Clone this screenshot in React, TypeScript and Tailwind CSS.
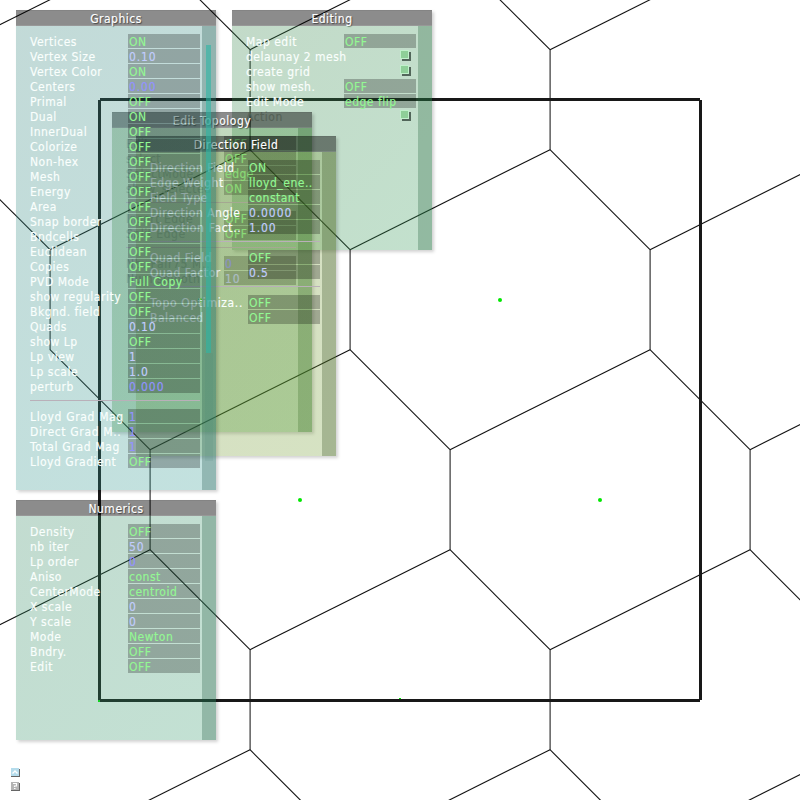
import React from "react";

type Kind = "toggle" | "num" | "locked" | "button" | "sep";

interface Row {
  label?: string;
  value?: string;
  kind: Kind;
  disabled?: boolean;
}

const on = (label: string, value = "OFF", disabled = false): Row => ({ label, value, kind: "toggle", disabled });
const num = (label: string, value: string, disabled = false): Row => ({ label, value, kind: "num", disabled });
const locked = (label: string, value: string, disabled = false): Row => ({ label, value, kind: "locked", disabled });
const button = (label: string, disabled = false): Row => ({ label, kind: "button", disabled });
const sep: Row = { kind: "sep" };

const graphics: Row[] = [
  on("Vertices", "ON"), num("Vertex Size", "0.10"), on("Vertex Color", "ON"), locked("Centers", "0.00"),
  on("Primal"), on("Dual", "ON"), on("InnerDual"), on("Colorize"), on("Non-hex"), on("Mesh"), on("Energy"),
  on("Area"), on("Snap border"), on("Bndcells"), on("Euclidean"), on("Copies"), on("PVD Mode", "Full Copy"),
  on("show regularity"), on("Bkgnd. field"), num("Quads", "0.10"), on("show Lp"), num("Lp view", "1"),
  num("Lp scale", "1.0"), locked("perturb", "0.000"), sep, locked("Lloyd Grad Mag", "1"),
  locked("Direct Grad M..", "1"), locked("Total Grad Mag", "1"), on("Lloyd Gradient"),
];

const numerics: Row[] = [
  on("Density"), num("nb iter", "50"), locked("Lp order", "0"), on("Aniso", "const"),
  on("CenterMode", "centroid"), num("X scale", "0"), num("Y scale", "0"), on("Mode", "Newton"),
  on("Bndry."), on("Edit"),
];

const editing: Row[] = [
  on("Map edit"), button("delaunay 2 mesh"), button("create grid"), on("show mesh."),
  on("Edit Mode", "edge flip"), button("Action", true),
];

const topology: Row[] = [
  on("Edit", "OFF", true), on("select", "OFF", true), on("SelectMode", "edge", true),
  on("show_selected", "ON", true), sep, on("Insert Edge", "OFF", true), on("Split Edge", "OFF", true), sep,
  locked("Nb. Pair75 M..", "0", true), num("Num smooth", "10", true),
];

const direction: Row[] = [
  on("Direction Field", "ON"), on("Edge Weight", "lloyd_ene.."), on("Field Type", "constant"),
  num("Direction Angle", "0.0000"), num("Direction Fact..", "1.00"), sep, on("Quad Field"),
  num("Quad Factor", "0.5"), sep, on("Topo Optimiza.."), on("Balanced"),
];

const valueColor: Record<Kind, string> = {
  toggle: "text-[#93f893]",
  num: "text-[#c2cdff] tracking-[0.9px]",
  locked: "text-[#9292ff] tracking-[0.9px]",
  button: "",
  sep: "",
};

// Labels cut short with dots, and the gradient read-outs, are set a little wider.
const labelTracking = (label = "") => (/\.\.$|Grad /.test(label) ? "tracking-[0.65px]" : "");

function PanelRow({ row }: { row: Row }) {
  if (row.kind === "sep") {
    return (
      <div className="h-[15px] pt-[6px]">
        <div className="h-px bg-[#b9b0b9]" />
      </div>
    );
  }
  return (
    <div className="flex h-[15px] leading-[17px]">
      <div
        className={`w-[98px] shrink-0 ${labelTracking(row.label)} ${row.disabled ? "text-[#9bb39f]" : "text-[#fafffd]"}`}
      >
        {row.label}
      </div>
      {row.kind === "button" ? (
        <div className="flex w-[72px] justify-end pt-[1px] pr-[7px]">
          <div className="h-[9px] w-[9px] border border-[#c0f0cb] bg-[#8ecf98] shadow-[2px_2px_0_#52665a]" />
        </div>
      ) : (
        <div className={`h-[14px] w-[72px] bg-black/25 pl-[1px] ${valueColor[row.kind]}`}>{row.value}</div>
      )}
    </div>
  );
}

interface PanelProps {
  title: string;
  rows: Row[];
  place: string;
  fill: string;
  track: string;
  thumb?: boolean;
}

function Panel({ title, rows, place, fill, track, thumb }: PanelProps) {
  return (
    <section className={`absolute flex w-[200px] flex-col shadow-[2px_2px_3px_rgba(0,0,0,0.18)] ${place}`}>
      <header className="h-[16px] border-t border-b border-t-black/5 border-b-white/10 bg-black/45 text-center leading-[17px] text-white [text-shadow:1px_1px_1px_rgba(0,0,0,0.5)]">
        {title}
      </header>
      <div className={`flex min-h-0 flex-1 ${fill}`}>
        <div className="w-[186px] pt-[8px] pr-[2px] pl-[14px]">
          {rows.map((row, i) => (
            <PanelRow key={i} row={row} />
          ))}
        </div>
        <div className={`flex w-[14px] flex-col items-center pt-[19px] pr-[1px] ${track}`}>
          {thumb && <div className="h-[308px] w-[5px] bg-[#2bb5a5]/60" />}
          {thumb && <div className="h-[108px] w-[8px] bg-[#378078]/10" />}
        </div>
      </div>
    </section>
  );
}

const verticals: [number, number][] = [
  [250, 50], [550, 50], [50, 250], [350, 250], [650, 250], [150, 450], [450, 450], [750, 450], [250, 650], [550, 650],
];

const junctions: [number, number][] = [
  [-50, 50], [250, 50], [550, 50], [850, 50], [50, 250], [350, 250], [650, 250], [150, 450], [450, 450],
  [750, 450], [250, 650], [550, 650], [-50, 650], [850, 650], [50, 850], [350, 850], [650, 850],
];

// Each lattice cell repeats a falling edge and a rising edge below its vertical one.
const lowerEnds: [number, number][] = [
  [250, 150], [550, 150], [-50, 150], [50, 350], [350, 350], [650, 350],
  [150, 550], [450, 550], [750, 550], [250, 750], [550, 750],
];

function MeshView() {
  return (
    <svg className="absolute inset-0" width="800" height="800" viewBox="0 0 800 800">
      <g stroke="#111" strokeWidth="1.1">
        {junctions.map(([x, y], i) => (
          <line key={i} x1={x} y1={y - 0.3} x2={x + 200} y2={y - 100.3} />
        ))}
        {lowerEnds.map(([x, y], i) => (
          <line key={i} x1={x} y1={y - 0.3} x2={x + 100} y2={y + 99.7} />
        ))}
        <line x1="150" y1="-50" x2="250" y2="49.7" />
        <line x1="450" y1="-50" x2="550" y2="49.7" />
      </g>
      <g stroke="#222" strokeWidth="1.1">
        {verticals.map(([x, y], i) => (
          <line key={i} x1={x + 0.1} y1={y} x2={x + 0.1} y2={y + 100} />
        ))}
      </g>
      <g stroke="#181818" strokeWidth="3">
        <line x1="100" y1="99.5" x2="700" y2="99.5" />
        <line x1="100" y1="700.5" x2="700" y2="700.5" />
        <line x1="99.5" y1="100" x2="99.5" y2="700" />
        <line x1="700.5" y1="100" x2="700.5" y2="700" />
      </g>
      <g fill="#00e800">
        <circle cx="500" cy="300" r="2" />
        <circle cx="300" cy="500" r="2" />
        <circle cx="600" cy="500" r="2" />
        <circle cx="200" cy="300" r="2" />
        <rect x="399" y="698" width="2" height="1" />
        <rect x="98" y="700" width="2" height="2" />
      </g>
    </svg>
  );
}

export default function App() {
  return (
    <main className="relative h-[800px] w-[800px] overflow-hidden bg-white font-['DejaVu_Sans_Condensed','DejaVu_Sans',sans-serif] text-[12px] tracking-[0.5px] whitespace-nowrap [-webkit-text-stroke:0.15px_currentColor] [font-stretch:condensed]">
      <MeshView />
      <Panel
        title="Editing"
        rows={editing}
        place="left-[232px] top-[10px] h-[240px]"
        fill="bg-[linear-gradient(135deg,rgba(55,133,75,0.3),rgba(55,155,90,0.3))]"
        track="bg-[rgba(20,85,45,0.28)]"
      />
      <Panel
        title="Edit Topology"
        rows={topology}
        place="left-[112px] top-[112px] h-[320px]"
        fill="bg-[linear-gradient(135deg,rgba(51,125,41,0.3),rgba(51,145,41,0.3))]"
        track="bg-[rgba(30,85,30,0.28)]"
      />
      <Panel
        title="Direction Field"
        rows={direction}
        place="left-[136px] top-[136px] h-[320px]"
        fill="bg-[linear-gradient(135deg,rgba(118,145,52,0.3),rgba(118,160,55,0.3))]"
        track="bg-[rgba(43,70,23,0.28)]"
      />
      <Panel
        title="Graphics"
        rows={graphics}
        place="left-[16px] top-[10px] h-[480px]"
        fill="bg-[linear-gradient(135deg,rgba(55,133,125,0.3),rgba(55,158,150,0.3))]"
        track="bg-[rgba(20,75,65,0.28)]"
        thumb
      />
      <Panel
        title="Numerics"
        rows={numerics}
        place="left-[16px] top-[500px] h-[240px]"
        fill="bg-[linear-gradient(135deg,rgba(55,138,100,0.3),rgba(55,155,110,0.3))]"
        track="bg-[rgba(20,80,55,0.28)]"
      />
      <div className="absolute top-[768px] left-[11px] flex flex-col gap-[6px]">
        <svg width="9" height="8" viewBox="0 0 9 8" className="overflow-visible">
          <path d="M1 1h8v8h-9v-1z" fill="#666" />
          <rect width="8" height="8" fill="#b5dcec" />
          <path d="M1.5 5.5L4 3l2.5 2.5" stroke="#fff" strokeWidth="1.4" fill="none" />
        </svg>
        <svg width="9" height="8" viewBox="0 0 9 8" className="overflow-visible">
          <path d="M1 1h8v8h-9v-1z" fill="#666" />
          <rect width="8" height="8" fill="#b4b4b4" />
          <path d="M2 1.5h3.5v2.5h-2v1M3 6.5h1.5" stroke="#fff" strokeWidth="1.2" fill="none" />
        </svg>
      </div>
    </main>
  );
}
